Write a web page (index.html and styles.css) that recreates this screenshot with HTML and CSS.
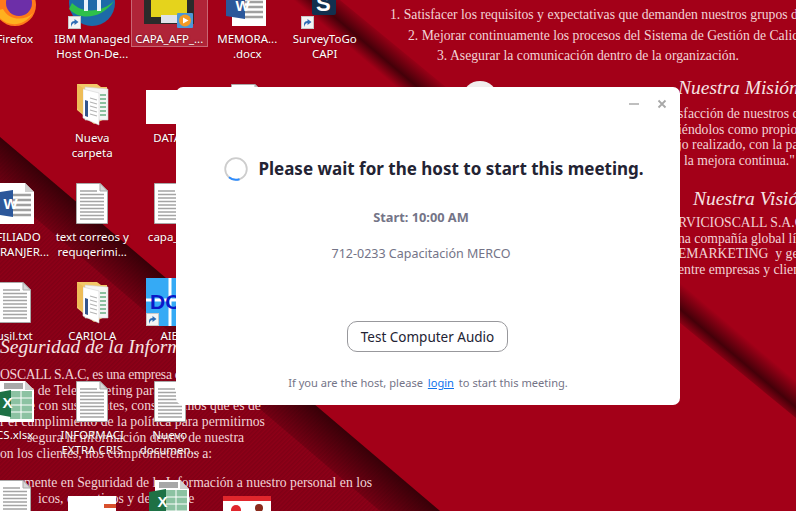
FILE: index.html
```html
<!DOCTYPE html>
<html lang="en">
<head>
    <meta charset="UTF-8">
    <meta name="viewport" content="width=device-width, initial-scale=1.0">
    <title>Please wait for the host</title>
    <link rel="stylesheet" href="styles.css">
</head>
<body>
    <div class="desktop">
        <!-- wallpaper folds -->
        <svg class="folds" viewBox="0 0 796 511">
            <defs>
                <pattern id="stripes" width="3" height="3" patternUnits="userSpaceOnUse" patternTransform="rotate(-45)">
                    <rect width="3" height="1.500" fill="#000" opacity="0.1"/>
                </pattern>
                <linearGradient id="fold-main" gradientUnits="userSpaceOnUse" x1="540" y1="164" x2="518" y2="190">
                    <stop offset="0" stop-color="#3f0008" stop-opacity="0"/>
                    <stop offset="0.6" stop-color="#3f0008" stop-opacity="0.95"/>
                    <stop offset="1" stop-color="#3f0008" stop-opacity="0"/>
                </linearGradient>
                <linearGradient id="fold-low" gradientUnits="userSpaceOnUse" x1="200" y1="307" x2="166" y2="347">
                    <stop offset="0" stop-color="#2f0006" stop-opacity="0.9"/>
                    <stop offset="1" stop-color="#2f0006" stop-opacity="0"/>
                </linearGradient>
            </defs>
            <polygon points="0,137 440,511 0,511" fill="#8e0018"/>
            <polygon points="0,137 440,511 0,511" fill="url(#stripes)"/>
            <polygon points="0,137 440,511 380,511 0,188" fill="url(#fold-low)"/>
            <polygon points="340,0 286,0 796,418 796,374" fill="url(#fold-main)"/>
        </svg>

        <div class="wall-top">
            <p>1. Satisfacer los requisitos y expectativas que demanden nuestros grupos de</p>
            <p class="line-two">2. Mejorar continuamente los procesos del Sistema de Gestión de Calid</p>
            <p class="line-three">3. Asegurar la comunicación dentro de la organización.</p>
        </div>

        <div class="wall-right mision">
            <h3>Nuestra Misión</h3>
            <p>sfacción de nuestros c</p>
            <p>iéndolos como propio</p>
            <p>jo realizado, con la pa</p>
            <p class="push">la mejora continua."</p>
        </div>

        <div class="wall-right vision">
            <h3>Nuestra Visión</h3>
            <p>RVICIOSCALL S.A.C.</p>
            <p>na compañía global lí</p>
            <p>EMARKETING&nbsp; y gest</p>
            <p>entre empresas y clien</p>
        </div>

        <div class="wall-left">
            <h3>Seguridad de la Información</h3>
            <p class="tight">OSCALL S.A.C, es una empresa de</p>
            <p class="indent-s">s de Telemarketing para</p>
            <p class="indent-s">e con sus clientes, consideramos que es de</p>
            <p>r el cumplimiento de la política para permitirnos</p>
            <p class="indent-m">segura la información dentro de nuestra</p>
            <p>on los clientes, nos comprometemos a:</p>
            <p class="gap">mente en Seguridad de la Información a nuestro personal en los</p>
            <p class="indent-l">icos, operativos y de soporte</p>
        </div>

        <svg class="defs-only">
            <defs>
                <symbol id="page" viewBox="0 0 48 48">
                    <path d="M8.500 4.500H32L39.500 12V44.500H8.500Z" fill="#fff" stroke="#a9a9a9"/>
                    <path d="M32 4.500V12H39.500Z" fill="#d8d8d8" stroke="#a9a9a9"/>
                    <path d="M12 12H29M12 15.500H36M12 19H36M12 22.500H36M12 26H36M12 29.500H36M12 33H36M12 36.500H36M12 40H36" stroke="#a4a4a4" stroke-width="1.400"/>
                </symbol>
                <symbol id="word" viewBox="0 0 48 48">
                    <path d="M9 4H34L43 13V45H9Z" fill="#fff"/>
                    <path d="M34 4V13H43Z" fill="#d0d0d0"/>
                    <path d="M22 16H40M22 21H40M22 26H40M22 31H40M22 36H40" stroke="#a0a0a0" stroke-width="2.600"/>
                    <path d="M3 14L22 11V38L3 35Z" fill="#2b579a"/>
                    <text x="12.500" y="30" class="tile-letter">W</text>
                </symbol>
                <symbol id="excel" viewBox="0 0 48 48">
                    <path d="M9 4H34L43 13V45H9Z" fill="#fff"/>
                    <path d="M34 4V13H43Z" fill="#d0d0d0"/>
                    <path d="M13 6H32V12H13Z" fill="#a8a8a8"/>
                    <path d="M19 14H41V42H19Z" fill="#8cc2a2"/>
                    <path d="M19 21H41M19 28H41M19 35H41M30 14V42" stroke="#fff"/>
                    <path d="M3 16L20 13V40L3 37Z" fill="#1e7145"/>
                    <text x="11.500" y="31" class="tile-letter">X</text>
                </symbol>
                <symbol id="folder" viewBox="0 0 48 48">
                    <path d="M9 4H29L33 7H39V38L26 44L9 30Z" fill="#f2c869"/>
                    <path d="M17 7L40 9V40L17 40Z" fill="#f5f5f5" stroke="#cfcfcf" stroke-width="0.600"/>
                    <path d="M15 9L31 13V45L15 38Z" fill="#fff" stroke="#d4d4d4" stroke-width="0.600"/>
                    <path d="M17 20L20 21V37L17 36Z" fill="#34558c"/>
                    <path d="M22 18L29 20M22 22L29 24M22 26L29 28M22 30L29 32M22 34L29 36" stroke="#b4b4b4" stroke-width="1.200"/>
                    <path d="M32 15H38M32 19H38M32 23H38M32 27H38M32 31H38M32 35H38" stroke="#8cbf9f" stroke-width="2"/>
                    <path d="M9 4L15 8V34L9 28Z" fill="#eebc57"/>
                </symbol>
                <symbol id="shortcut" viewBox="0 0 13 13">
                    <rect x="0.500" y="0.500" width="12" height="12" fill="#f4f4f4" stroke="#c8c8c8"/>
                    <path d="M3 11V8C3 6 4.500 5 6.500 5V3L10.500 6L6.500 9V7C5 7 4 8.500 3 11Z" fill="#2f6db5"/>
                </symbol>
            </defs>
        </svg>

        <div class="icon-grid">
            <!-- row 1 -->
            <div class="icon">
                <svg class="glyph" viewBox="0 0 48 48">
                    <circle cx="24" cy="24" r="21" fill="#ff7a1a"/>
                    <circle cx="28" cy="22" r="13" fill="#6d2fa8"/>
                    <path d="M4 30C10 44 30 50 42 32C34 40 18 40 12 28Z" fill="#ffb01f"/>
                </svg>
                <span>Firefox</span>
            </div>
            <div class="icon">
                <svg class="glyph" viewBox="0 0 48 48">
                    <circle cx="24" cy="22" r="23" fill="#1d6aa8"/>
                    <path d="M1 28C12 40 34 38 46 20C36 30 16 34 4 22Z" fill="#2fc04a"/>
                    <path d="M16 4H20V14H29V4H33V30H29V18H20V30H16Z" fill="#e9f3fb"/>
                    <use href="#shortcut" x="0" y="35" width="13" height="13"/>
                </svg>
                <span>IBM Managed<br>Host On-De...</span>
            </div>
            <div class="icon selected">
                <svg class="glyph" viewBox="0 0 48 48">
                    <rect x="-1" y="0" width="50" height="43" fill="#2b2b2b"/>
                    <rect x="6" y="0" width="36" height="36" fill="#e5d31c"/>
                    <rect x="16" y="34" width="24" height="8" fill="#dfe3ea"/>
                    <rect x="32" y="32" width="16" height="15" rx="1" fill="#4c97d8"/>
                    <circle cx="40" cy="39.500" r="6" fill="#f59a23"/>
                    <path d="M38 36.500L43.500 39.500L38 42.500Z" fill="#fff"/>
                </svg>
                <span>CAPA_AFP_...</span>
            </div>
            <div class="icon">
                <svg class="glyph"><use href="#word"/></svg>
                <span>MEMORA...<br>.docx</span>
            </div>
            <div class="icon">
                <svg class="glyph" viewBox="0 0 48 48">
                    <rect x="11" y="0" width="24" height="34" rx="2" fill="#12304f"/>
                    <text x="15" y="30" class="tile-letter big">S</text>
                    <use href="#shortcut" x="0" y="35" width="13" height="13"/>
                </svg>
                <span>SurveyToGo<br>CAPI</span>
            </div>

            <!-- row 2 -->
            <div class="icon"></div>
            <div class="icon">
                <svg class="glyph"><use href="#folder"/></svg>
                <span>Nueva<br>carpeta</span>
            </div>
            <div class="icon">
                <div class="thumb thumb-white"></div>
                <span>DATA_</span>
            </div>
            <div class="icon">
                <svg class="glyph"><use href="#page"/></svg>
            </div>
            <div class="icon"></div>

            <!-- row 3 -->
            <div class="icon">
                <svg class="glyph"><use href="#word"/></svg>
                <span>AFILIADO<br>EXTRANJER...</span>
            </div>
            <div class="icon">
                <svg class="glyph"><use href="#page"/></svg>
                <span>text correos y<br>requqerimi...</span>
            </div>
            <div class="icon">
                <svg class="glyph"><use href="#page"/></svg>
                <span>capa_30</span>
            </div>
            <div class="icon"></div>
            <div class="icon"></div>

            <!-- row 4 -->
            <div class="icon">
                <svg class="glyph"><use href="#page"/></svg>
                <span>usil.txt</span>
            </div>
            <div class="icon">
                <svg class="glyph"><use href="#folder"/></svg>
                <span>CARIOLA</span>
            </div>
            <div class="icon">
                <svg class="glyph" viewBox="0 0 48 48">
                    <rect width="48" height="48" fill="#35aaf5"/>
                    <path d="M0 22H48M24 0V48" stroke="#fff" stroke-width="3"/>
                    <text x="4" y="31" class="aib-letters">DO</text>
                    <use href="#shortcut" x="0" y="35" width="13" height="13"/>
                </svg>
                <span>AIB</span>
            </div>
            <div class="icon"></div>
            <div class="icon"></div>

            <!-- row 5 -->
            <div class="icon">
                <svg class="glyph"><use href="#excel"/></svg>
                <span>CS.xlsx</span>
            </div>
            <div class="icon">
                <svg class="glyph"><use href="#page"/></svg>
                <span>INFORMACI<br>EXTRA CRIS</span>
            </div>
            <div class="icon">
                <svg class="glyph"><use href="#page"/></svg>
                <span>Nuevo<br>documen...</span>
            </div>
            <div class="icon"></div>
            <div class="icon"></div>

            <!-- row 6 -->
            <div class="icon">
                <svg class="glyph"><use href="#page"/></svg>
            </div>
            <div class="icon">
                <svg class="glyph" viewBox="0 0 48 48">
                    <rect y="20" width="48" height="28" fill="#fff"/>
                    <rect x="36" y="28" width="12" height="4" fill="#d8502c"/>
                </svg>
            </div>
            <div class="icon">
                <svg class="glyph"><use href="#excel"/></svg>
            </div>
            <div class="icon">
                <svg class="glyph" viewBox="0 0 48 48">
                    <rect y="20" width="48" height="28" fill="#fff"/>
                    <rect y="20" width="48" height="5" fill="#e0262c"/>
                    <circle cx="13" cy="34" r="5" fill="#e0262c"/>
                    <circle cx="36" cy="32" r="4" fill="#8a2a1c"/>
                </svg>
            </div>
            <div class="icon"></div>
        </div>

        <div class="wall-disc"></div>

        <div class="dialog">
            <div class="window-controls">
                <svg class="ctl" viewBox="0 0 10 10"><path d="M0 5H10" stroke="#b0b0b0" stroke-width="1.600"/></svg>
                <svg class="ctl" viewBox="0 0 10 10"><path d="M1.500 1.500L8.500 8.500M8.500 1.500L1.500 8.500" stroke="#a8a8a8" stroke-width="1.800"/></svg>
            </div>
            <div class="wait-row">
                <svg class="spinner" viewBox="0 0 24 24">
                    <circle cx="12" cy="12" r="10.800" fill="none" stroke="#cdcdcd" stroke-width="1.800"/>
                    <path d="M5 20.200A10.800 10.800 0 0 0 15.500 22.200" fill="none" stroke="#2d8cff" stroke-width="2"/>
                </svg>
                <h1>Please wait for the host to start this meeting.</h1>
            </div>
            <div class="start-time">Start: 10:00 AM</div>
            <div class="meeting-name">712-0233 Capacitación MERCO</div>
            <button class="audio-btn" type="button">Test Computer Audio</button>
            <p class="host-note">If you are the host, please <a href="#">login</a> to start this meeting.</p>
        </div>
    </div>
</body>
</html>
```

FILE: styles.css
```css
html, body {
    margin: 0;
    padding: 0;
    height: 100%;
}
body {
    overflow: hidden;
    font-family: "Noto Sans", "Open Sans", sans-serif;
}
.desktop {
    position: relative;
    width: 796px;
    height: 511px;
    overflow: hidden;
    background-color: #a30018;
}
.folds {
    position: absolute;
    left: 0;
    top: 0;
    width: 796px;
    height: 511px;
}
.defs-only {
    position: absolute;
    width: 0;
    height: 0;
}

/* text printed on the wallpaper */
.wall-top, .wall-right, .wall-left {
    position: absolute;
    font-family: "Liberation Serif", serif;
    font-size: 13.700px;
    color: #f2d3d6;
    white-space: nowrap;
}
.wall-top p, .wall-right p, .wall-left p {
    margin: 0;
}
.wall-top {
    left: 390px;
    top: 5px;
    line-height: 20.500px;
}
.line-two {
    padding-left: 18px;
}
.line-three {
    padding-left: 47px;
}
.wall-right {
    left: 678px;
    line-height: 15.700px;
}
.wall-right h3, .wall-left h3 {
    margin: 0;
    font-family: "Liberation Serif", serif;
    font-style: italic;
    font-weight: normal;
    font-size: 19.500px;
    line-height: 26px;
    color: #f6e4e4;
}
.mision {
    top: 75px;
}
.mision h3 {
    margin-bottom: 5px;
}
.vision {
    top: 186px;
}
.vision h3 {
    margin: 0 0 3px 15px;
}
.push {
    padding-left: 6px;
}
.wall-left {
    left: 0;
    top: 334px;
    line-height: 15.700px;
}
.wall-left h3 {
    margin-bottom: 7px;
}
.tight {
    letter-spacing: -0.300px;
}
.indent-s {
    padding-left: 29px;
}
.indent-m {
    padding-left: 27px;
}
.indent-l {
    padding-left: 38px;
}
.gap {
    padding-left: 24px;
    margin-top: 14px !important;
}
.wall-disc {
    position: absolute;
    left: 463px;
    top: 81px;
    width: 34px;
    height: 30px;
    border-radius: 50%;
    background-color: #f1eeee;
}

/* desktop icons */
.icon-grid {
    position: absolute;
    left: -24px;
    top: -21px;
    display: grid;
    grid-template-columns: repeat(5, 77.500px);
    grid-auto-rows: 99px;
}
.icon {
    display: flex;
    flex-direction: column;
    align-items: center;
    padding-top: 2px;
    box-sizing: border-box;
    font-size: 11.500px;
    line-height: 15px;
    color: #fff;
    text-align: center;
    white-space: nowrap;
}
.icon span {
    margin-top: 2px;
    text-shadow: 0 0 2px rgba(60, 0, 0, 0.6);
}
.glyph {
    display: block;
    flex: none;
    width: 48px;
    height: 48px;
    overflow: visible;
}
.selected {
    align-self: start;
    height: 68px;
    margin-right: 1px;
    background-color: rgba(255, 255, 255, 0.14);
    border: 1px solid rgba(255, 255, 255, 0.3);
    padding-top: 1px;
}
.thumb {
    flex: none;
    width: 48px;
    height: 34px;
    margin: 10px 0 4px;
}
.thumb-white {
    background-color: #fff;
}
.tile-letter {
    font-family: "Liberation Sans", sans-serif;
    font-weight: bold;
    font-size: 15px;
    fill: #fff;
}
.tile-letter.big {
    font-size: 22px;
}
.aib-letters {
    font-family: "Liberation Sans", sans-serif;
    font-weight: bold;
    font-size: 21px;
    fill: #0a18c8;
}

/* zoom dialog */
.dialog {
    position: absolute;
    left: 176px;
    top: 87px;
    width: 504px;
    height: 318px;
    box-sizing: border-box;
    background-color: #fff;
    border-radius: 7px;
    display: flex;
    flex-direction: column;
    align-items: center;
    color: #232333;
}
.window-controls {
    align-self: flex-end;
    display: flex;
    gap: 18px;
    padding: 12px 13px 0 0;
}
.ctl {
    display: block;
    width: 10px;
    height: 10px;
}
.wait-row {
    display: flex;
    align-items: center;
    gap: 10px;
    margin: 48px 0 0 12px;
}
.spinner {
    width: 24px;
    height: 24px;
    flex: none;
}
h1 {
    margin: 0;
    font-size: 17px;
    line-height: 24px;
    font-weight: 700;
    white-space: nowrap;
}
.start-time {
    margin: 27px 14px 0 0;
    font-size: 12.800px;
    line-height: 18px;
    font-weight: 700;
    color: #747487;
}
.meeting-name {
    margin: 19px 14px 0 0;
    font-size: 12.500px;
    line-height: 18px;
    color: #747487;
}
.audio-btn {
    width: 161px;
    height: 31px;
    margin: 58px 0 0 -1px;
    padding: 0;
    background-color: #fff;
    border: 1px solid #98989c;
    border-radius: 10px;
    font-family: "Noto Sans", "Open Sans", sans-serif;
    font-size: 13.500px;
    color: #232333;
    cursor: pointer;
}
.host-note {
    margin: 23px 0 0;
    font-size: 11.100px;
    line-height: 16px;
    color: #747487;
}
.host-note a {
    color: #0e72ed;
    margin: 0 2px;
}
```
